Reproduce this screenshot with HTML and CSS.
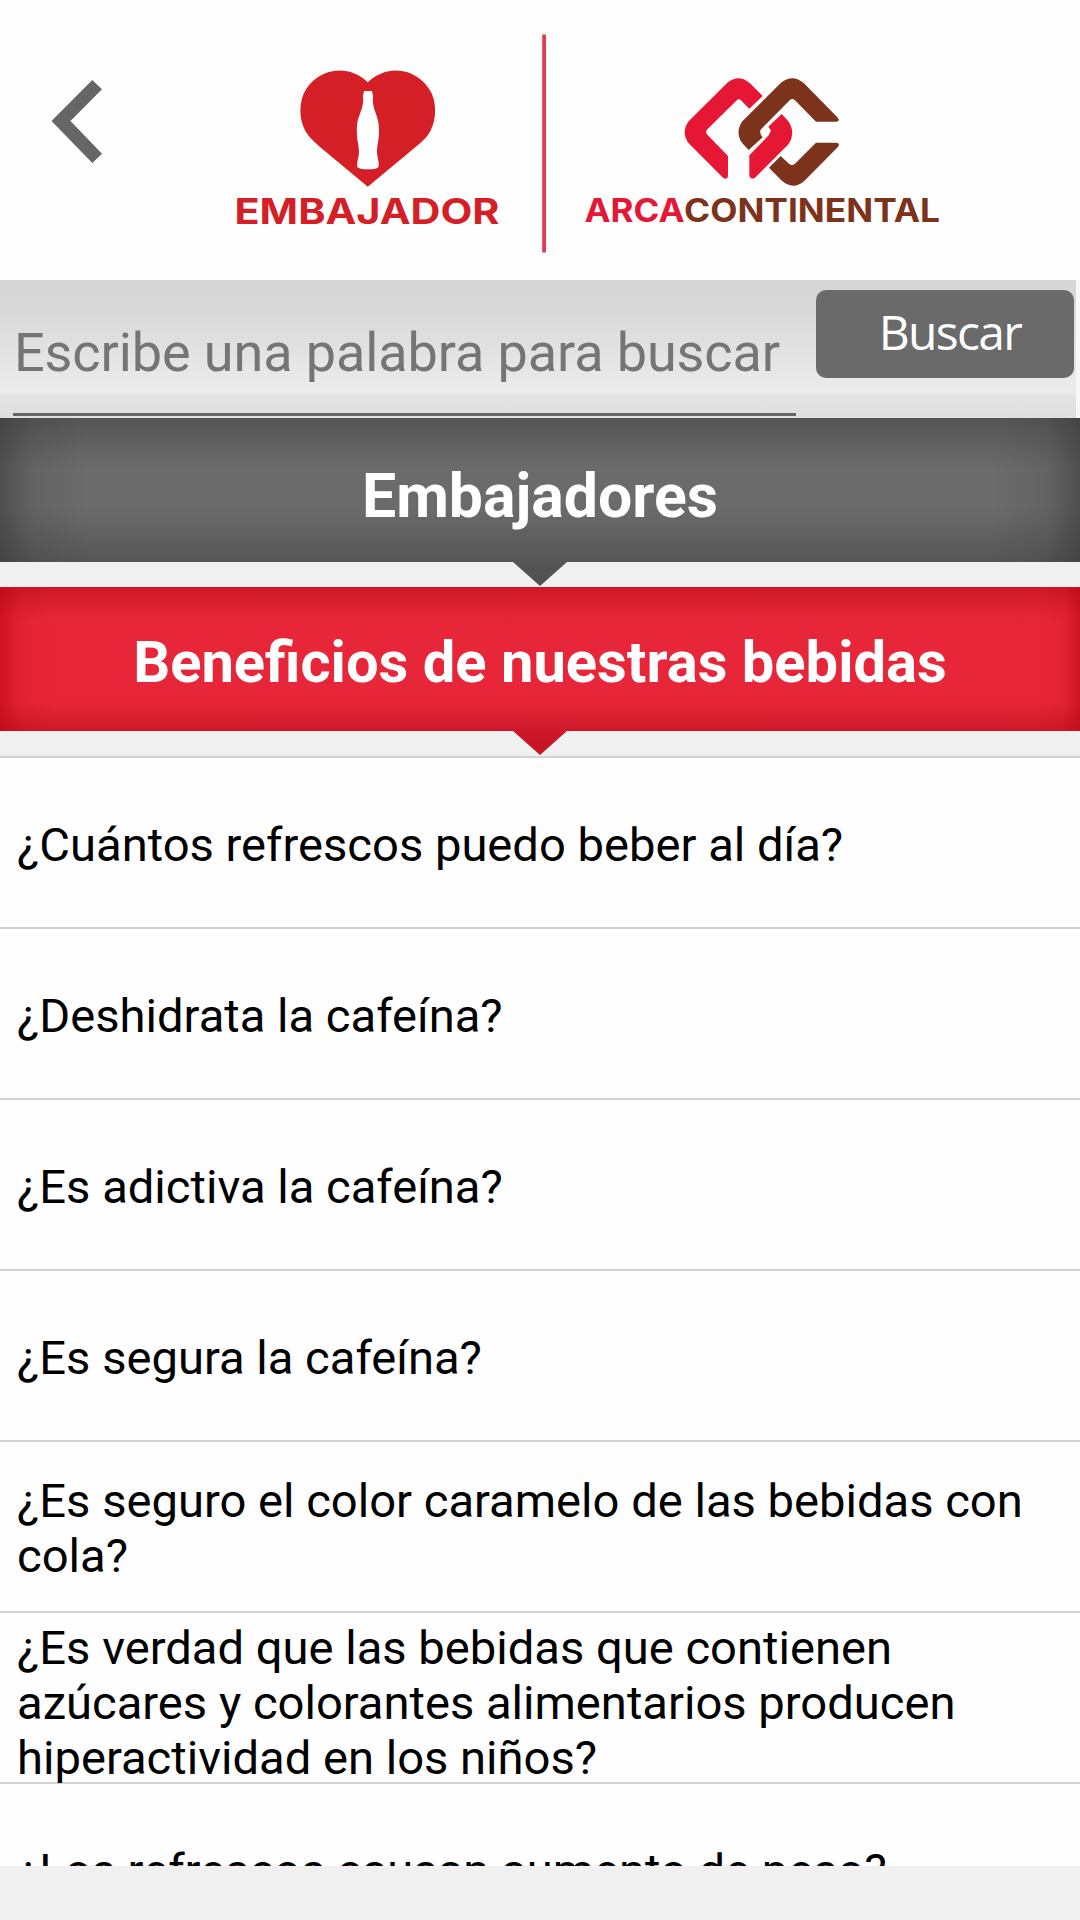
FILE: index.html
```html
<!DOCTYPE html>
<html lang="es">
<head>
  <meta charset="UTF-8" />
  <meta name="viewport" content="width=device-width, initial-scale=1.0"/>
  <title>Embajadores</title>
  <link rel="stylesheet" href="styles.css">
</head>
<body>

<!-- Header -->
<header>
  <svg class="logos" viewBox="0 0 1080 280">
    <path fill="#666" d="M51.5 121 L92.3 80 L102 89.3 L70.5 121 L102 153.7 L92.3 163 Z"/>

    <path fill="#d41f26" d="M367.8 82.3 C347 62 315 69 303.5 94 C298 108 300 124 308 135 C312 140 316 143 320 147 L367.8 186.7 L415.6 147 C420 143 424 140 428 135 C435.5 124 437.5 108 432 94 C420 69 389 62 367.8 82.3 Z"/>
    <path fill="#fff" d="M364 91 H372 Q373.5 95 372.8 101 C373.5 112 379 116 379 130 C379 141 377 145 377 152 C377.3 158 379.5 162 378.5 167 Q377 169.3 368 169.3 Q359 169.3 357.3 167 C356.5 162 358.8 158 359 152 C359 145 356.8 141 356.8 130 C356.8 116 362.5 112 363.2 101 Q362.5 95 364 91 Z"/>
    <text class="embajador" x="234.5" y="223.5" textLength="265" lengthAdjust="spacingAndGlyphs">EMBAJADOR</text>

    <rect x="542.2" y="34.5" width="3.8" height="218" fill="#e23a50"/>

    <g transform="translate(660 60) scale(.33333)">
      <path fill="#e61635" d="M308 108 L268 146 L244 122 Q237 114 229 122 L142 208 Q135 216 142 224 L204 288 V348 Q202 360 190 354 L86 250 Q62 218 86 184 L202 68 Q236 40 270 70 Z"/>
      <path fill="#7d321c" d="M532 172 Q542 182 530 185 H468 L405 121 Q397 113 389 121 L303 208 Q296 218 308 232 L266 270 L247 250 Q224 218 247 184 L363 68 Q398 40 432 70 Z"/>
      <path fill="#e61635" d="M365 162 L325 200 L333 212 L326 226 L268 286 V346 Q270 360 284 354 L386 252 Q408 218 385 184 Z"/>
      <path fill="#7d321c" d="M362 288 L327 323 L364 361 Q398 392 432 364 L533 262 Q542 250 530 248 H468 L405 311 Q396 319 387 311 Z"/>
    </g>
    <text class="arca" x="584.5" y="221.7" textLength="100" lengthAdjust="spacingAndGlyphs">ARCA</text>
    <text class="arca continental" x="684" y="221.7" textLength="256" lengthAdjust="spacingAndGlyphs">CONTINENTAL</text>
  </svg>
</header>

<!-- Search -->
<form class="search">
  <input type="text" placeholder="Escribe una palabra para buscar" />
  <button type="button">Buscar</button>
</form>

<h1 class="banner">Embajadores</h1>
<h2 class="banner banner-red">Beneficios de nuestras bebidas</h2>

<!-- Questions -->
<ul class="questions">
  <li>¿Cuántos refrescos puedo beber al día?</li>
  <li>¿Deshidrata la cafeína?</li>
  <li>¿Es adictiva la cafeína?</li>
  <li>¿Es segura la cafeína?</li>
  <li>¿Es seguro el color caramelo de las bebidas con cola?</li>
  <li class="long">¿Es verdad que las bebidas que contienen azúcares y colorantes alimentarios producen hiperactividad en los niños?</li>
  <li>¿Los refrescos causan aumento de peso?</li>
</ul>

</body>
</html>
```
FILE: styles.css
```css
* { box-sizing: border-box; }

body {
  margin: 0;
  width: 1080px;
  height: 1920px;
  overflow: hidden;
  background: #f0f0f0;
  font-family: Roboto, sans-serif;
}

header {
  height: 280px;
  background: #fefefe;
}

.logos {
  display: block;
  width: 1080px;
  height: 280px;
}

.embajador {
  font: 700 35.5px Inter, sans-serif;
  fill: #d41f26;
}

.arca {
  font: 700 32px Inter, sans-serif;
  fill: #e61635;
}

.continental { fill: #7d321c; }

.search {
  display: flex;
  align-items: flex-start;
  justify-content: space-between;
  height: 138px;
  padding: 10px 2px 0 13px;
  border-right: 4px solid #f7f7f7;
  background: linear-gradient(#d5d5d5, #d9d9d9 25%, #ececec 82%, #e3e3e3 83%, #dfdfdf);
}

.search input {
  width: 783px;
  height: 126px;
  padding: 1px 0 0 1px;
  border: none;
  border-bottom: 3px solid #666;
  background: none;
  color: #757575;
  font: 54px Roboto, sans-serif;
  letter-spacing: -0.1px;
  outline: none;
}

.search input::placeholder {
  color: #757575;
  opacity: 1;
}

.search button {
  width: 258px;
  height: 88px;
  padding: 0 0 6px 10px;
  border: none;
  border-radius: 10px;
  background: #6a6a6a;
  color: #fff;
  font: 48px "Open Sans", sans-serif;
  letter-spacing: -1.7px;
}

.banner {
  height: 169px;
  margin: 0;
  color: #fff;
  font-size: 60.75px;
  font-weight: 700;
  line-height: 158px;
  text-align: center;
  background:
    linear-gradient(90deg, rgba(50,50,50,.5), rgba(50,50,50,.15) 3%, transparent 8%, transparent 92%, rgba(50,50,50,.15) 97%, rgba(50,50,50,.5)),
    linear-gradient(#555, #6b6b6b 50px, #6b6b6b 90px, #555 144px, #505050);
  clip-path: polygon(0 0, 100% 0, 100% 144px, 567px 144px, 540px 168px, 513px 144px, 0 144px);
}

.banner-red {
  font-size: 57.9px;
  line-height: 150px;
  background:
    linear-gradient(90deg, rgba(180,0,15,.5), rgba(180,0,15,.12) 2%, transparent 5%, transparent 96%, rgba(180,0,15,.12) 98.5%, rgba(180,0,15,.5)),
    linear-gradient(#cc1828, #e8263a 32px, #e8263a 115px, #cc1828 144px, #c41424);
}

.questions {
  height: 1110px;
  margin: 0;
  padding: 0;
  overflow: hidden;
  list-style: none;
  background: #fefefe;
}

.questions li {
  display: flex;
  align-items: center;
  height: 171px;
  padding: 5px 16px 0 17px;
  border-top: 2px solid #d2d2d2;
  font-size: 47.15px;
  line-height: 55px;
  color: #000;
}

.questions .long { padding-top: 11px; }
```
